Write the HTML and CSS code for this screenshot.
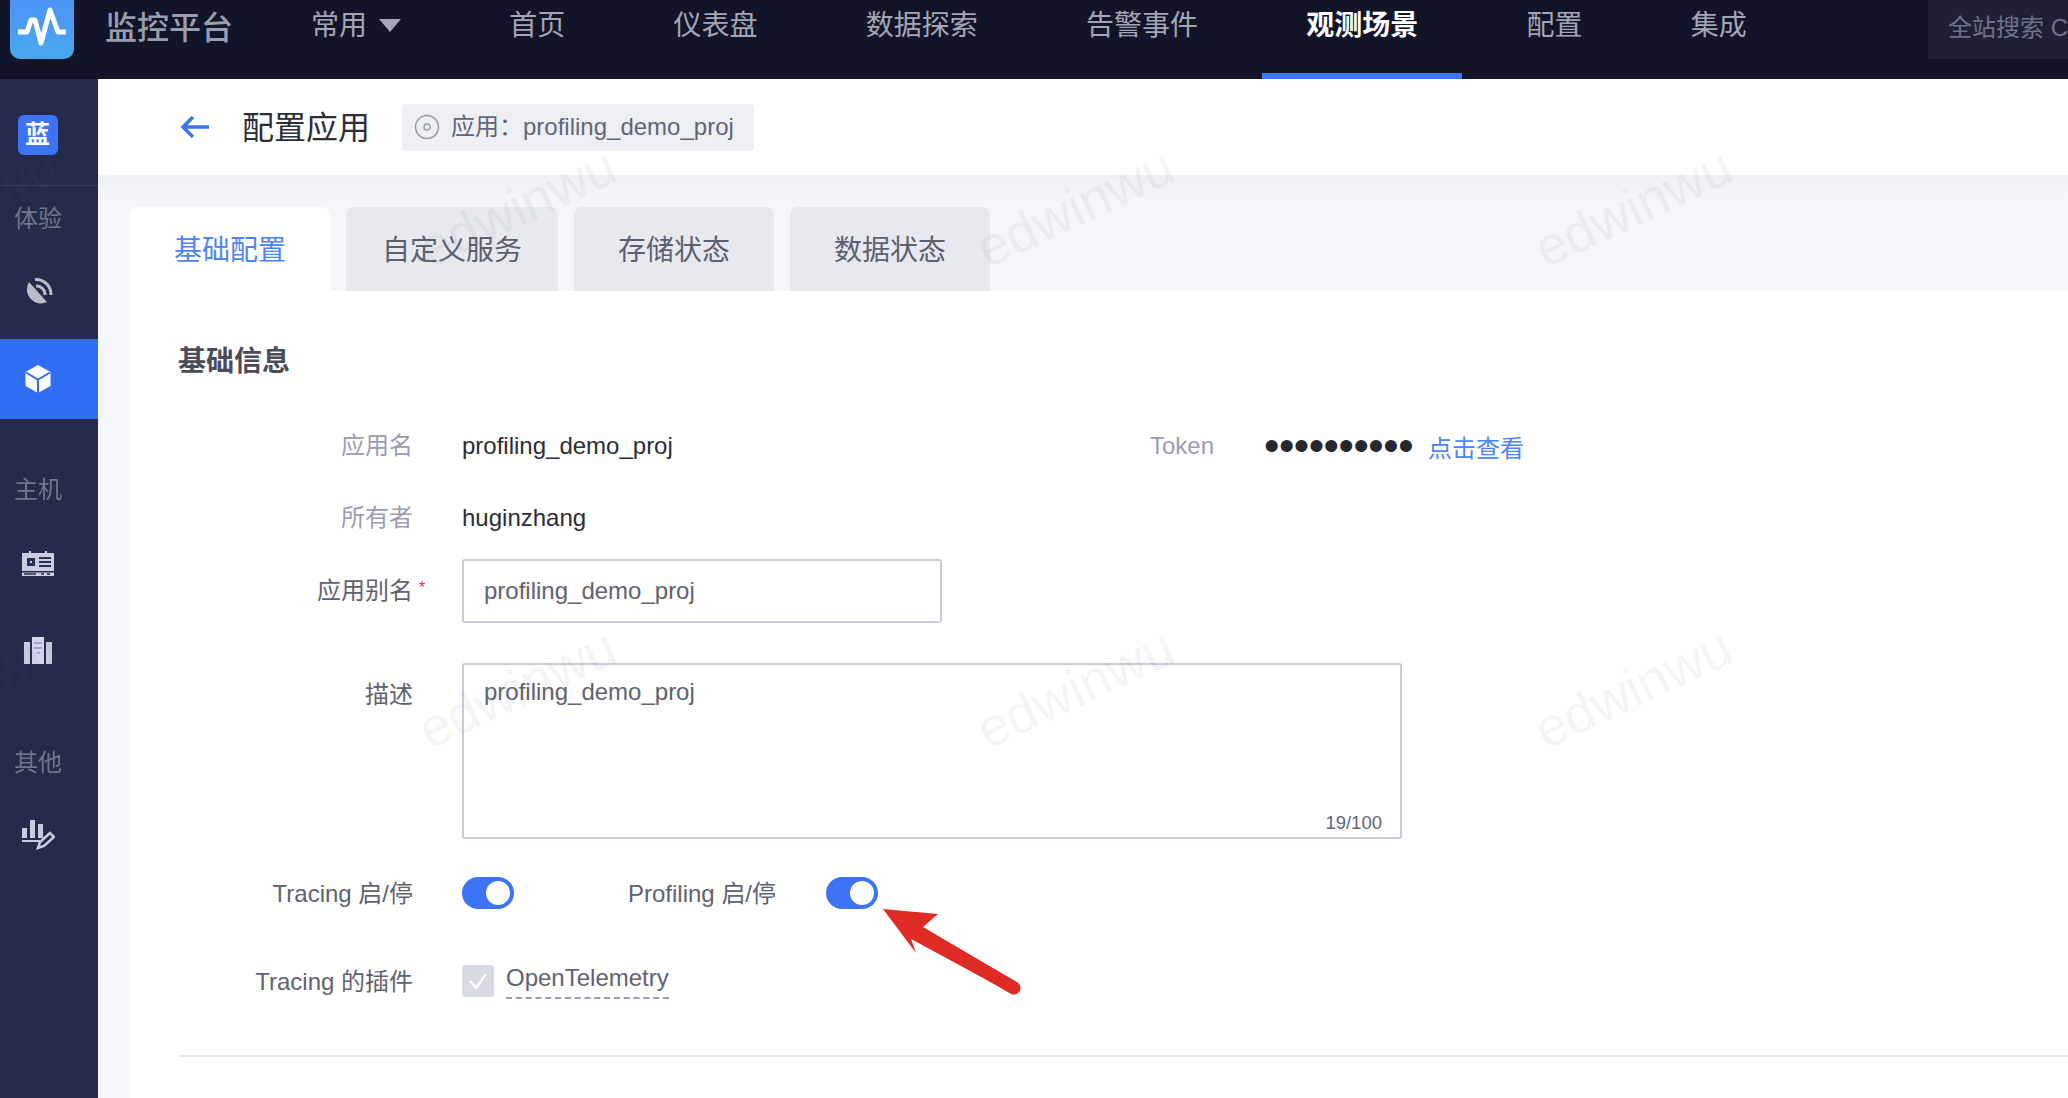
FILE: index.html
```html
<!DOCTYPE html>
<html lang="zh">
<head>
<meta charset="utf-8">
<title>配置应用</title>
<link rel="stylesheet" href="styles.css">
</head>
<body>
<div class="page">
  <header class="topbar">
    <div class="logo">
      <svg width="64" height="60" viewBox="0 0 64 60"><path d="M8 32h9l4-12h4l6 23 9-33 8 22h8" fill="none" stroke="#fff" stroke-width="5" stroke-linejoin="round"/></svg>
    </div>
    <div class="brand">监控平台</div>
    <nav class="nav">
      <a class="nav-item">常用<span class="caret"></span></a>
      <a class="nav-item">首页</a>
      <a class="nav-item">仪表盘</a>
      <a class="nav-item">数据探索</a>
      <a class="nav-item">告警事件</a>
      <a class="nav-item active">观测场景</a>
      <a class="nav-item">配置</a>
      <a class="nav-item">集成</a>
    </nav>
    <div class="search">全站搜索 CTRL+K</div>
  </header>
  <div class="body">
    <aside class="side">
      <div class="side-top"><span class="badge">蓝</span></div>
      <div class="side-label first">体验</div>
      <div class="side-icon">
        <svg width="32" height="32" viewBox="0 0 32 32"><path d="M7 6A14 14 0 0 0 25 26z" fill="#b9bbc9"/><path d="M13 3.500A15 15 0 0 1 29 19M14 10a8.500 8.500 0 0 1 9 9" fill="none" stroke="#b9bbc9" stroke-width="3"/></svg>
      </div>
      <div class="side-icon current">
        <svg width="28" height="30" viewBox="0 0 28 30"><path d="M14 1l12.500 7v14L14 29 1.500 22V8z" fill="#fff"/><path d="M2 8.500l12 7 12-7M14 15.500V29" fill="none" stroke="#2f6ef5" stroke-width="2"/></svg>
      </div>
      <div class="side-label second">主机</div>
      <div class="side-icon host">
        <svg width="34" height="28" viewBox="0 0 34 28"><path d="M1 4h7V2h2v2h14V2h2v2h7v18H1z" fill="#c9cce0"/><rect x="1" y="23.500" width="32" height="3.500" fill="#c9cce0"/><rect x="6" y="9" width="8" height="8" fill="#2a2e52"/><rect x="9" y="12" width="2" height="2" fill="#c9cce0"/><path d="M18 9h12M18 13h12M18 17h12" stroke="#2a2e52" stroke-width="2"/><path d="M3 25h12M20 25h3M26 25h3" stroke="#2a2e52" stroke-width="1.500"/></svg>
      </div>
      <div class="side-icon">
        <svg width="30" height="30" viewBox="0 0 30 30"><path d="M1 7h6v22H1zM23 7h6v22h-6z" fill="#c9cce0"/><path d="M9 2h12v27H9z" fill="#d4d6ea"/><path d="M11 8h8M11 13h8M14 18h3" stroke="#8f93bb" stroke-width="1.500"/></svg>
      </div>
      <div class="side-label third">其他</div>
      <div class="side-icon tools">
        <svg width="34" height="34" viewBox="0 0 34 34"><path d="M1 10h5v10H1zM9 2h5v18H9zM17 6h5v14h-5z" fill="#c9cce0"/><path d="M1 23h20" stroke="#c9cce0" stroke-width="2"/><path d="M17 30l2-6 10-9 4 4-10 9z" fill="none" stroke="#c9cce0" stroke-width="2.500"/></svg>
      </div>
    </aside>
    <main class="main">
      <div class="titlebar">
        <svg class="back" width="30" height="24" viewBox="0 0 30 24"><path d="M13 2L3 12l10 10M3 12h26" fill="none" stroke="#3d74f5" stroke-width="3.500"/></svg>
        <h1 class="title">配置应用</h1>
        <div class="pill">
          <svg width="26" height="26" viewBox="0 0 26 26"><circle cx="13" cy="13" r="11.500" fill="none" stroke="#9a9cad" stroke-width="1.500"/><circle cx="13" cy="13" r="3" fill="none" stroke="#9a9cad" stroke-width="1.500"/></svg>
          <span class="pill-text">应用：profiling_demo_proj</span>
        </div>
      </div>
      <div class="tabs">
        <div class="tab active">基础配置</div>
        <div class="tab wide">自定义服务</div>
        <div class="tab">存储状态</div>
        <div class="tab">数据状态</div>
      </div>
      <section class="panel">
        <h2 class="heading">基础信息</h2>
        <div class="row info-one">
          <div class="label soft">应用名</div>
          <div class="value name">profiling_demo_proj</div>
          <div class="token-label soft">Token</div>
          <div class="dots">••••••••••</div>
          <a class="link">点击查看</a>
        </div>
        <div class="row info-two">
          <div class="label soft">所有者</div>
          <div class="value">huginzhang</div>
        </div>
        <div class="row alias">
          <div class="label">应用别名<span class="req">*</span></div>
          <div class="input">profiling_demo_proj</div>
        </div>
        <div class="row desc">
          <div class="label">描述</div>
          <div class="textarea">profiling_demo_proj<span class="count">19/100</span></div>
        </div>
        <div class="row toggles">
          <div class="label latin">Tracing 启/停</div>
          <span class="switch"></span>
          <div class="label-inline">Profiling 启/停</div>
          <span class="switch"></span>
        </div>
        <div class="row plugins">
          <div class="label latin">Tracing 的插件</div>
          <span class="check"><svg width="24" height="24" viewBox="0 0 24 24"><path d="M4 12l6 7L20 5" fill="none" stroke="#fff" stroke-width="2.500"/></svg></span>
          <span class="plugin">OpenTelemetry</span>
        </div>
        <div class="divider"></div>
      </section>
    </main>
  </div>
  <div class="overlay">
    <span class="mark m1">edwinwu</span>
    <span class="mark m2">edwinwu</span>
    <span class="mark m3">edwinwu</span>
    <span class="mark m4">edwinwu</span>
    <span class="mark m5">edwinwu</span>
    <span class="mark m6">edwinwu</span>
    <span class="mark m7">edwinwu</span>
    <span class="mark m8">edwinwu</span>
    <svg class="arrow" width="150" height="90" viewBox="0 0 150 90"><path d="M0 0L55 5 40 18 135 74 128 84 28 30 33 44z" fill="#e02a24"/><path d="M36 24l95 55" stroke="#e02a24" stroke-width="13" stroke-linecap="round"/></svg>
  </div>
</div>
</body>
</html>
```
FILE: styles.css
```css
* { box-sizing: border-box; }
html, body { margin: 0; height: 100%; overflow: hidden; }
body { background: #fff; font-family: "Liberation Sans", "Noto Sans CJK SC", sans-serif; font-size: 24px; color: #2b2d3a; }
.page { position: relative; width: 2068px; height: 1098px; overflow: hidden; display: flex; flex-direction: column; filter: blur(0.7px); }

.topbar { height: 79px; flex: none; display: flex; background: #12152a; }
.logo { width: 64px; height: 59px; margin-left: 10px; border-radius: 0 0 10px 10px; background: linear-gradient(180deg, #4b93f6, #49a9ec); }
.brand { margin-left: 31px; width: 128px; font-size: 32px; font-weight: 500; line-height: 56px; color: #9a9dad; white-space: nowrap; }
.nav { display: flex; gap: 20.250px; margin-left: 34px; }
.nav-item { height: 79px; padding: 0 44px; font-size: 28px; line-height: 52px; color: #a3a6b4; white-space: nowrap; display: flex; align-items: flex-start; }
.nav-item.active { color: #fff; font-weight: 700; border-bottom: 6px solid #3d74f5; }
.caret { width: 0; height: 0; margin: 19px 0 0 12px; border: 11px solid transparent; border-top: 13px solid #a3a6b4; border-bottom: 0; }
.search { width: 140px; height: 59px; margin-left: auto; padding-left: 20px; background: #1e2136; color: #6f7389; line-height: 56px; white-space: nowrap; overflow: hidden; }

.body { flex: 1; display: flex; min-height: 0; }
.side { width: 98px; flex: none; background: #262b4b; }
.side-top { height: 107px; padding-top: 36px; border-bottom: 1px solid #3c405c; text-align: center; }
.badge { display: inline-block; width: 40px; height: 40px; margin-left: -23px; border-radius: 6px; background: #3d74f5; color: #fff; font-size: 25px; font-weight: 700; line-height: 39px; }
.side-label { height: 48px; padding-right: 22px; color: #72758c; line-height: 48px; text-align: center; }
.side-label.first { margin-top: 9px; }
.side-label.second { margin-top: 47px; }
.side-label.third { margin-top: 46px; }
.side-icon { height: 87px; padding-right: 22px; margin-top: 5px; display: flex; align-items: center; justify-content: center; }
.side-icon.current { height: 80px; margin-top: 4px; background: #2f6ef5; }
.side-icon + .side-icon.host { margin-top: 0; }
.host + .side-icon { margin-top: 0; }
.side-icon.tools { margin-top: 4px; }

.main { flex: 1; min-width: 0; background: #f5f6fa; display: flex; flex-direction: column; }
.titlebar { height: 96px; flex: none; padding-left: 82px; display: flex; align-items: center; background: #fff; }
.back { flex: none; }
.title { margin: 0 0 0 32px; padding-bottom: 5px; font-size: 32px; font-weight: 400; color: #2b2d3a; }
.pill { height: 47px; width: 352px; margin-left: 32px; padding-left: 12px; display: flex; align-items: center; gap: 11px; border-radius: 4px; background: #eeeff3; color: #62657a; white-space: nowrap; }
.pill-text { padding-bottom: 5px; }

.tabs { flex: none; height: 116px; padding: 32px 0 0 32px; display: flex; gap: 16px; background: linear-gradient(180deg, #eff0f5, #f5f6fa 24px); }
.tab { width: 200px; height: 84px; border-radius: 8px 8px 0 0; background: #e8e9ee; color: #5c5f6e; font-size: 28px; line-height: 87px; text-align: center; }
.tab.wide { width: 212px; }
.tab.active { background: #fff; color: #4d85f7; }

.panel { flex: 1; margin-left: 32px; padding: 51px 0 0 48px; background: #fff; }
.heading { margin: 0 0 44px; height: 40px; font-size: 28px; font-weight: 700; line-height: 40px; color: #4a4c5a; }
.row { display: flex; align-items: center; }
.label { width: 235px; margin-right: 49px; padding-bottom: 5px; flex: none; text-align: right; color: #5f6270; white-space: nowrap; position: relative; }
.label.latin { padding-bottom: 3px; }
.soft { color: #9a9cb2; }
.req { position: absolute; left: calc(100% + 6px); top: 8px; color: #e5343a; font-size: 16px; }
.info-one, .info-two { height: 40px; }
.info-two { margin-top: 32px; }
.name { width: 212px; }
.value { color: #2b2d3a; }
.token-label { margin-left: 476px; width: 114px; }
.dots { width: 164px; font-size: 44px; line-height: 40px; letter-spacing: -0.500px; color: #26272f; white-space: nowrap; }
.link { color: #4d85f7; }
.alias { margin-top: 21px; height: 64px; }
.input { width: 480px; height: 64px; padding-left: 20px; border: 2px solid #c9cbd9; border-radius: 3px; color: #5f6270; line-height: 59px; }
.desc { margin-top: 40px; align-items: flex-start; }
.desc .label { margin-top: 12px; }
.textarea { position: relative; width: 940px; height: 176px; padding: 13px 20px; border: 2px solid #c9cbd9; border-radius: 3px; color: #5f6270; }
.count { position: absolute; right: 18px; bottom: 3px; font-size: 18.500px; color: #62657a; }
.toggles { margin-top: 38px; height: 32px; }
.switch { position: relative; width: 52px; height: 32px; flex: none; border-radius: 16px; background: #3d74f5; }
.switch::after { content: ""; position: absolute; top: 4px; right: 4px; width: 24px; height: 24px; border-radius: 50%; background: #fff; }
.label-inline { margin: 0 49px 0 114px; padding-bottom: 3px; width: 149px; color: #5f6270; white-space: nowrap; }
.plugins { margin-top: 56px; height: 32px; }
.check { width: 32px; height: 32px; padding: 4px; flex: none; border-radius: 3px; background: #d8dae4; }
.plugin { margin-left: 12px; position: relative; top: 0; padding-bottom: 5px; border-bottom: 2px dashed #9a9cb2; color: #5f6270; white-space: nowrap; }
.divider { margin-top: 58px; height: 2px; background: #e8e9ee; }

.overlay { position: absolute; inset: 0; pointer-events: none; }
.mark { position: absolute; width: 240px; margin-left: -120px; margin-top: -30px; font-size: 54px; line-height: 60px; text-align: center; color: rgba(90, 95, 125, 0.07); transform: rotate(-25deg); white-space: nowrap; }
.m1 { left: -41px; top: 207px; }
.m2 { left: 517px; top: 207px; }
.m3 { left: 1075px; top: 207px; }
.m4 { left: 1633px; top: 207px; }
.m5 { left: -41px; top: 688px; }
.m6 { left: 517px; top: 688px; }
.m7 { left: 1075px; top: 688px; }
.m8 { left: 1633px; top: 688px; }
.arrow { position: absolute; left: 883px; top: 909px; }
```
